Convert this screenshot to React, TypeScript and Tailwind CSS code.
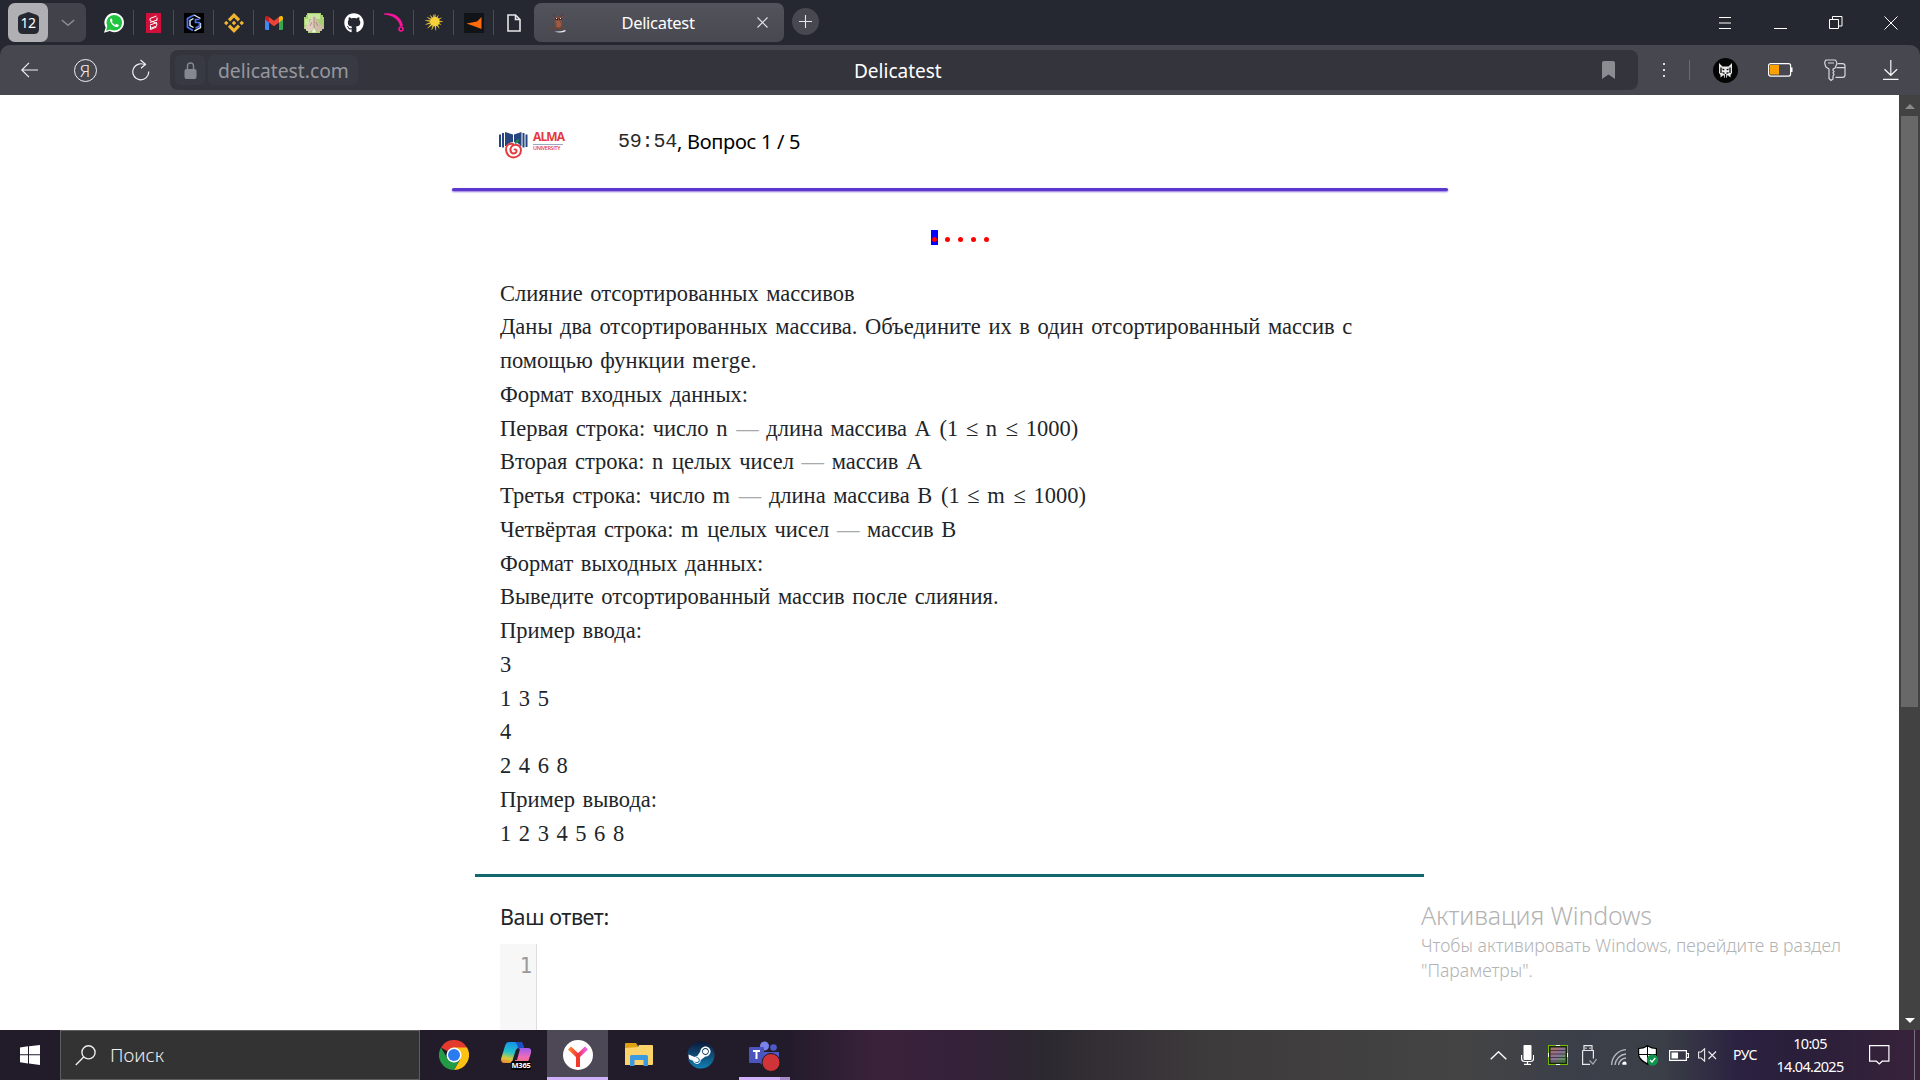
import { type ReactNode } from 'react';
import { FaGithub, FaSteam } from 'react-icons/fa';
import { SiBinance } from 'react-icons/si';

function Pin({ children }: { children: ReactNode }) {
  return (
    <div className="flex h-[25px] w-10 shrink-0 items-center justify-center border-r border-[#4b4d56] last:border-transparent">
      {children}
    </div>
  );
}

function HandsIcon() {
  return (
    <svg width="20" height="20" viewBox="0 0 20 20">
      <path d="M3 0h14v2h2v2h1v12h-2v2h-2v2H4v-2H2v-2H0V4h2V2h1z" fill="#a5cf72" />
      <path d="M4 1h12v5H4zM1 6h4v6H1z" fill="#c9e69f" />
      <path d="M9.800 3C8 4 6 8 5 10l-4 4 1 3 4 2 4-4z" fill="#e0cdbf" />
      <path d="M10.200 3C12 4 14 8 15 10l4 4-1 3-4 2-4-4z" fill="#d2baa9" />
      <path d="M10 4v11M8 9l-2 4M12 9l2 4" stroke="#9c8576" strokeWidth=".8" fill="none" />
      <path d="M7.500 19.500l2.500-4.500 2.500 4.500z" fill="#e8f2dc" />
    </svg>
  );
}

function Sun() {
  const rays = [
    [-90, 8], [-62, 7], [-30, 7.5], [0, 8], [28, 7], [58, 8], [85, 9], [112, 9], [138, 10], [162, 10], [186, 10], [208, 9], [232, 8], [256, 7],
  ];
  return (
    <svg width="18" height="18" viewBox="0 0 18 18">
      <circle cx="10" cy="7.500" r="4.600" fill="#f8d23a" />
      {rays.map(([a, r]) => (
        <path key={a} d={`M10 6.300L${10 + r} 7.500 10 8.700z`} fill="#f8d23a" stroke="#f8d23a" strokeWidth=".3" transform={`rotate(${a} 10 7.500)`} />
      ))}
    </svg>
  );
}

function Owl() {
  return (
    <svg width="18" height="20" viewBox="0 0 18 20">
      <path d="M5.500 3l2 1h3.500l3-1.500-1 4v6l-2.500 3H8L6 12z" fill="#8a4a34" />
      <path d="M6 5h3v2H6zM10 5h3v2h-3z" fill="#27324a" />
      <path d="M7 5h1v1H7zM11 5h1v1h-1z" fill="#d6dbe8" />
      <path d="M7 9h4M8 11h4M7.500 13h4" stroke="#c27a58" strokeWidth=".8" />
      <path d="M4.500 1l1.500 3M14 1l-2 3" stroke="#5d3a35" />
      <path d="M1 16l5-1 6 1 5-1" stroke="#6b4338" strokeWidth="1.500" fill="none" />
      <path d="M5 18q5 1.500 11-1l1 1q-6 3-12 0z" fill="#e8eef8" />
    </svg>
  );
}

function TabStrip() {
  return (
    <div className="flex h-[45px] items-start bg-[#252830]">
      <div className="ml-2 mt-[3px] flex h-[39px] w-[78px] items-center rounded-[7px] bg-[#42424b]">
        <div className="flex h-[39px] w-10 items-center justify-center rounded-[7px] bg-[#afafb4]">
          <div className="relative mt-px flex h-[22px] w-[21px] items-center justify-center">
            <svg className="absolute inset-0" width="21" height="22" viewBox="0 0 21 22">
              <path d="M10.500 0l8.500 3q2 1 2 3v11q0 5-5 5H5q-5 0-5-5V6q0-2 2-3z" fill="#252830" />
            </svg>
            <span className="relative font-['Noto_Sans'] text-[14px] leading-none tracking-[-0.5px] text-white">12</span>
          </div>
        </div>
        <svg className="ml-[13px]" width="14" height="8" viewBox="0 0 14 8">
          <path d="M.8 1L7 6.300 13.200 1" fill="none" stroke="#8d8d94" strokeWidth="1.500" />
        </svg>
      </div>
      <div className="ml-2 mt-[10px] flex">
        <Pin>
          <svg width="20" height="20" viewBox="0 0 20 20">
            <path d="M10.300 0a9.600 9.600 0 1 1-4.600 18L0 19.700l1.700-5.300A9.600 9.600 0 0 1 10.300 0z" fill="#fff" />
            <circle cx="10.300" cy="9.700" r="7.800" fill="#1fc43f" />
            <path d="M2 17.700l1.500-5 3.500 3.600z" fill="#1fc43f" />
            <path d="M7.300 5.200c-1.300.6-1.600 2-.9 3.600 1.100 2.600 3 4.400 5.500 5.200 1.400.4 2.800-.5 3-2.100l-2.500-1.200-1.100 1.200c-1.700-.7-2.700-1.800-3.400-3.200l.8-1z" fill="#fff" />
          </svg>
        </Pin>
        <Pin>
          <svg width="15" height="20" viewBox="0 0 15 20">
            <path d="M0 0h15v20H0z" fill="#d0103a" />
            <path d="M10.500 3L4 5.500v2l7 3-.5 2.500L4 15.500M4 9.500L11 7M11 4.500v3M4 12l7-2.500M4.500 12.500v4l6-2.500" fill="none" stroke="#fff" strokeWidth="1" />
          </svg>
        </Pin>
        <Pin>
          <svg width="20" height="20" viewBox="0 0 20 20">
            <path d="M0 0h20v20H0z" fill="#000" />
            <path d="M10 2L3.500 5.500v8.700L9 17.500" fill="none" stroke="#4c75e8" strokeWidth="1.800" />
            <path d="M10 2l6.500 3.500M10.500 17.800l6-3.300V10" fill="none" stroke="#e8ecf8" strokeWidth="1.400" />
            <path d="M9.500 5.500L6 7.500v5l3.500 2" fill="none" stroke="#e8ecf8" strokeWidth="1.400" />
            <path d="M15.500 6.500h-4v3h4v3.500l-4 2" fill="none" stroke="#4c75e8" strokeWidth="1.700" />
          </svg>
        </Pin>
        <Pin><SiBinance size={20} color="#f0b42f" /></Pin>
        <Pin>
          <svg width="18" height="14" viewBox="0 0 18 14">
            <path d="M0 2.500V12.800Q0 14 1.200 14H4V6z" fill="#4285f4" />
            <path d="M18 2.500V12.800Q18 14 16.800 14H14V6z" fill="#34a853" />
            <path d="M14 1v5.500l4-3V2c0-2-2-2.500-3.400-1.400z" fill="#fbbc04" />
            <path d="M4 1v5.500l-4-3V2C0 0 2-.5 3.400.6z" fill="#c5221f" />
            <path d="M4 1l5 3.800L14 1v5.500l-5 3.800-5-3.800z" fill="#ea4335" />
          </svg>
        </Pin>
        <Pin><HandsIcon /></Pin>
        <Pin><FaGithub size={20} color="#fff" /></Pin>
        <Pin>
          <svg width="20" height="19" viewBox="0 0 20 19">
            <path d="M0 .5C8-.8 17 2 19 13h-3C15 7 9 2 0 1.500z" fill="#fb149b" />
            <circle cx="17" cy="16" r="2" fill="none" stroke="#fb149b" strokeWidth="1.500" />
          </svg>
        </Pin>
        <Pin><Sun /></Pin>
        <Pin>
          <svg width="20" height="20" viewBox="0 0 20 20">
            <path d="M0 0h20v20H0z" fill="#111416" />
            <path d="M2.500 10.500L13 8.500 17.500 4v12L11 13.500z" fill="#fd6a0b" />
          </svg>
        </Pin>
        <Pin>
          <svg width="14" height="18" viewBox="0 0 14 18">
            <path d="M1 1h7.500L13 5.500V17H1z M8.500 1v4.500H13" fill="none" stroke="#e5e5e8" strokeWidth="1.600" />
          </svg>
        </Pin>
      </div>
      <div className="mt-[3px] flex h-[39px] w-[250px] items-center rounded-[7px] bg-gradient-to-b from-[#53535c] to-[#484851] pl-[15px]">
        <Owl />
        <div className="w-[182px] text-center">
          <span className="font-['Noto_Sans'] text-[16.5px] leading-[39px] tracking-[-0.3px] text-white">Delicatest</span>
        </div>
        <svg className="ml-[8px]" width="11" height="11" viewBox="0 0 11 11">
          <path d="M.5.5l10 10M10.500.5l-10 10" stroke="#e6e6e8" strokeWidth="1.100" />
        </svg>
      </div>
      <div className="ml-2 mt-2 flex h-[27px] w-[27px] items-center justify-center rounded-full bg-[#484851]">
        <svg width="13" height="13" viewBox="0 0 13 13"><path d="M6.500 0v13M0 6.500h13" stroke="#e6e6e8" strokeWidth="1.100" /></svg>
      </div>
      <div className="ml-auto mr-[22px] flex h-[45px] items-center">
        <svg className="mr-[43px]" width="12" height="12" viewBox="0 0 12 12"><path d="M0 .5h12M0 6h12M0 11.500h12" stroke="#fff" /></svg>
        <svg className="mr-[42px] mt-[12px]" width="13" height="1"><path d="M0 .5h13" stroke="#fff" /></svg>
        <svg className="mr-[41px]" width="14" height="14" viewBox="0 0 14 14">
          <path d="M.5 3.500h9v9h-9zM3.500 3.500v-3h9.500v9.500H9.500" fill="none" stroke="#fff" />
        </svg>
        <svg width="14" height="14" viewBox="0 0 14 14"><path d="M.5.5l13 13M13.500.5l-13 13" stroke="#fff" /></svg>
      </div>
    </div>
  );
}

function Toolbar() {
  return (
    <div className="bg-[#252830]">
      <div className="flex h-[50px] items-center rounded-t-[10px] bg-[#474750]">
        <svg className="ml-[21px]" width="18" height="16" viewBox="0 0 18 16">
          <path d="M.8 8H17M8 .8L.8 8 8 15.200" fill="none" stroke="#f0f0f2" strokeWidth="1.200" />
        </svg>
        <div className="ml-[35px] flex h-[23px] w-[23px] items-center justify-center rounded-full border border-[#f0f0f2]">
          <span className="mr-px font-['Noto_Sans'] text-[17px] font-light leading-none text-[#f0f0f2]">Я</span>
        </div>
        <svg className="ml-[35px]" width="18" height="22" viewBox="0 0 18 22">
          <path d="M16.800 12.500A8 8 0 1 1 13.500 6.300M8.500 1l5 4.300-4.500 4" fill="none" stroke="#f0f0f2" strokeWidth="1.200" />
        </svg>
        <div className="ml-[20px] flex h-10 w-[1468px] items-center rounded-[8px] bg-[#34343d]">
          <div className="ml-[5px] flex h-[30px] w-[30px] items-center justify-center rounded-[6px] bg-[#383a43]">
            <svg width="13" height="17" viewBox="0 0 13 17">
              <path d="M3.500 8V4a3 3 0 0 1 6 0v4" fill="none" stroke="#85888f" strokeWidth="1.400" />
              <rect x=".5" y="7" width="12" height="10" rx="2" fill="#85898f" />
            </svg>
          </div>
          <div className="ml-[3px] flex h-[30px] w-[150px] items-center rounded-[6px] bg-[#383a43] pl-[10px] pt-[2px]">
            <span className="font-['Noto_Sans'] text-[19.3px] leading-[30px] text-[#96979e]">delicatest.com</span>
          </div>
          <span className="ml-[496px] w-[90px] pt-[2px] font-['Noto_Sans'] text-[19px] leading-[38px] text-white">Delicatest</span>
          <svg className="ml-auto mr-[23px]" width="13" height="18" viewBox="0 0 13 18"><path d="M0 2q0-2 2-2h9q2 0 2 2v16l-6.500-4.500L0 18z" fill="#8b8b92" /></svg>
        </div>
        <svg className="ml-[25px]" width="3" height="15"><path d="M0 0h2v2H0zM0 6h2v2H0zM0 12h2v2H0z" fill="#dcdce0" /></svg>
        <div className="ml-[23px] h-5 w-px bg-[#6b6b74]" />
        <svg className="ml-[23px]" width="25" height="25" viewBox="0 0 25 25">
          <circle cx="12.500" cy="12.500" r="12.500" fill="#050505" />
          <path d="M6 5l3.500 3.500h6L19 5v10l-1.500 2v2.500L14.500 17l-1 3h-2l-1-3-3 2.500V17L6 15z" fill="#e9e9e9" />
          <path d="M8 9.500V15M17 9.500V15M9.500 11l1.800 1M15.500 11l-1.800 1M9.500 14.500l2 .8M15.500 14.500l-2 .8M12.500 16v4" fill="none" stroke="#050505" strokeWidth="1.300" />
        </svg>
        <svg className="ml-[30px]" width="26" height="14" viewBox="0 0 26 14">
          <rect x=".6" y=".6" width="22" height="12.500" rx="2" fill="none" stroke="#fff" strokeWidth="1.200" />
          <rect x="2" y="2" width="9" height="9.500" fill="#ffa200" />
          <path d="M23 4.500h1.500v4.500H23z" fill="#fff" />
        </svg>
        <svg className="ml-[30px]" width="22" height="23" viewBox="0 0 22 23">
          <path d="M2 1h9q2 1 1.800 4L11 9l-2 1v1.500l1 1-1 1.500 1 1.500-1 1.500v3L7 21.500l-2-2V10L2 8Q-.5 3 2 1zM4 4h6" fill="none" stroke="#d8d8dc" strokeWidth="1.200" />
          <path d="M13.500 4.600h5q2.500 0 2.500 2.500v9q0 2.300-2.500 2.300H11.500M12.500 8.600H21" fill="none" stroke="#d8d8dc" strokeWidth="1.200" />
        </svg>
        <svg className="ml-[37px]" width="16" height="20" viewBox="0 0 16 20">
          <path d="M7.800 0v15M1.500 9.300l6.300 6 6.300-6M0 19.400h15.500" fill="none" stroke="#f5f5f7" strokeWidth="1.200" />
        </svg>
      </div>
    </div>
  );
}

function L({ children }: { children: ReactNode }) {
  return <div className="h-[33.75px] leading-[33.75px]">{children}</div>;
}

const Dash = () => <span className="text-[#a6aaad]">—</span>;
const Sym = ({ children }: { children: ReactNode }) => <span className="tracking-[1.2px]">{children}</span>;

function Question() {
  return (
    <div className="ml-[500px] mt-[31.6px] h-[597.4px] whitespace-pre font-['Liberation_Serif'] text-[22.5px] text-[#212529] [word-spacing:1.95px]">
      <L>Слияние отсортированных массивов</L>
      <L>Даны два отсортированных массива. Объедините их в один отсортированный массив с</L>
      <L>помощью функции <span className="tracking-[0.6px]">merge</span>.</L>
      <L>Формат входных данных:</L>
      <L>Первая строка: число <Sym>n</Sym> <Dash /> длина массива <Sym>A</Sym> (1 ≤ <Sym>n</Sym> ≤ 1000)</L>
      <L>Вторая строка: <Sym>n</Sym> целых чисел <Dash /> массив A</L>
      <L>Третья строка: число <Sym>m</Sym> <Dash /> длина массива <Sym>B</Sym> (1 ≤ <Sym>m</Sym> ≤ 1000)</L>
      <L>Четвёртая строка: <Sym>m</Sym> целых чисел <Dash /> массив B</L>
      <L>Формат выходных данных:</L>
      <L>Выведите отсортированный массив после слияния.</L>
      <L>Пример ввода:</L>
      <L>3</L>
      <L>1 3 5</L>
      <L>4</L>
      <L>2 4 6 8</L>
      <L>Пример вывода:</L>
      <L>1 2 3 4 5 6 8</L>
    </div>
  );
}

function AlmaLogo() {
  return (
    <div className="flex h-[27px] w-[67px]">
      <svg width="29" height="27" viewBox="0 0 29 27">
        <path d="M0 2.500h2V15H0zM3 1h2v14.500H3zM6 0l8 2.500V16l-8-2zM15 2.500L22.500 0v14L15 16zM23.500 1h2v14.500h-2zM26.500 2.500h2V15h-2z" fill="#27457f" />
        <circle cx="14.500" cy="18.500" r="8.500" fill="#fff" />
        <path d="M15.500 12q1-4.500 4.500-5 0 4.500-4.500 5z" fill="#23894b" />
        <path d="M14.500 12.300q-1.500-1-4-.3-3.500 1.500-3.500 5.800 1 7.200 7.500 7.700 7-.8 7.500-7 0-4.500-4-5.500-5-.7-6.500 3.500-.5 4.500 3 5 3.500-.5 3-3-1-1.700-2.500-.8" fill="none" stroke="#e5393d" strokeWidth="1.900" />
      </svg>
      <div className="ml-[5px] flex flex-col font-['Open_Sans'] font-bold text-[#e5393d]">
        <span className="h-[12px] text-[12px] leading-[10px] tracking-[-0.9px]">ALMA</span>
        <span className="h-px w-[30px] bg-[#9aa6c0]" />
        <span className="mt-px h-[7px] text-[5.4px] font-semibold leading-[5px] tracking-[-0.35px]">UNIVERSITY</span>
      </div>
    </div>
  );
}

function Page() {
  return (
    <div className="relative flex h-[935px] overflow-hidden bg-white">
      <div className="flex w-[1899px] flex-col">
        <div className="ml-[452px] flex h-[93px] w-[995px] items-start pl-[47px]">
          <div className="mt-[37px]"><AlmaLogo /></div>
          <div className="ml-[52px] mt-[31.5px] flex h-[30px] leading-[30px] text-black">
            <span className="font-['Liberation_Mono'] text-[20px] tracking-[-0.2px] text-[#2a2a2a]">59:54</span>
            <span className="font-['Noto_Sans'] text-[20px] tracking-[-0.3px]">, Вопрос 1 / 5</span>
          </div>
        </div>
        <div className="ml-[452px] h-[3px] w-[996px] rounded-full bg-[#5d38cc] shadow-[0_1px_2px_#8f6fe0]" />
        <div className="ml-[931px] mt-[39px] flex h-[15px]">
          {[0, 1, 2, 3, 4].map((i) => (
            <div key={i} className="mr-[5.9px] flex h-[15px] w-[7px] items-center justify-center pt-[4px] first:bg-[#0000ff]">
              <span className="h-[5px] w-[5px] rounded-full bg-[#ff0000]" />
            </div>
          ))}
        </div>
        <Question />
        <div className="ml-[475px] h-[3px] w-[949px] bg-[#11686f]" />
        <div className="ml-[500px] mt-[23px] h-[34px] font-['Noto_Sans'] text-[21.5px] leading-[34px] tracking-[-0.4px] text-[#212529]">
          Ваш ответ:
        </div>
        <div className="ml-[500px] mt-[10px] h-[86px] w-[37px] border-r border-[#dddddd] bg-[#f7f7f7] pr-[4px] pt-[6px] text-right font-['DejaVu_Sans_Mono'] text-[20.5px] leading-[32px] text-[#999999]">1</div>
      </div>
      <div className="flex w-[21px] flex-col items-center bg-[#424242]">
        <svg className="mt-[9px]" width="10" height="6"><path d="M5 0l5 5H0z" fill="#8a8a8a" /></svg>
        <div className="mt-[6px] h-[591px] w-[17px] bg-[#686868]" />
        <svg className="mb-[6px] mt-auto" width="10" height="6"><path d="M0 0h10L5 5z" fill="#fff" /></svg>
      </div>
      <div className="absolute left-[1421px] top-[802px] font-['Noto_Sans'] font-light text-[#b3b3b3]">
        <div className="h-[36px] text-[25px] leading-[36px] tracking-[-0.15px]">Активация Windows</div>
        <div className="text-[17.6px] leading-[25px]">Чтобы активировать Windows, перейдите в раздел</div>
        <div className="text-[17.6px] leading-[25px]">"Параметры".</div>
      </div>
    </div>
  );
}

function Tray() {
  return (
    <div className="ml-auto flex h-[50px] items-center">
      <svg width="17" height="9" viewBox="0 0 17 9"><path d="M.7 8.300L8.500.8l7.800 7.500" fill="none" stroke="#fff" strokeWidth="1.400" /></svg>
      <svg className="ml-[14px]" width="13" height="20" viewBox="0 0 13 20">
        <rect x="2.500" width="8" height="15" rx="1" fill="#fff" />
        <path d="M.6 10v3.500q0 3 3 3h6q3 0 3-3V10M6.500 16.500v3M3 19.400h7" fill="none" stroke="#fff" strokeWidth="1.200" />
      </svg>
      <svg className="ml-[14px]" width="20" height="20" viewBox="0 0 20 20">
        <defs><linearGradient id="chip" x1="0" x2="1" y2="1"><stop stopColor="#b0705a" /><stop offset=".5" stopColor="#8a7098" /><stop offset="1" stopColor="#3fae3a" /></linearGradient></defs>
        <path d="M0 0h20v20H0z" fill="#76b900" />
        <path d="M1 1h18v18H1z" fill="#16240c" />
        <path d="M2.500 2.500h15v15h-15z" fill="url(#chip)" />
        <path d="M2 5.500h16M2 9h16M2 12.500h16M2 16h16" stroke="#3b3340" strokeWidth=".9" />
        <path d="M8 0h4v1H8zM8 19h4v1H8zM0 8h1v4H0zM19 8h1v4h-1z" fill="#fff" />
      </svg>
      <svg className="ml-[14px]" width="15" height="20" viewBox="0 0 15 20">
        <path d="M2 5.500V.6h8v5M.6 5.500h10.800v8M8 19.400H.6V5.500M4 2.500v1.500M8 2.500v1.500" fill="none" stroke="#e8e8ea" strokeWidth="1.200" />
        <path d="M7.500 15.500l3.500 3.500 3.500-5" fill="none" stroke="#a8a8ac" strokeWidth="1.300" />
      </svg>
      <svg className="ml-[14px] mt-[4px]" width="16" height="16" viewBox="0 0 16 16">
        <path d="M.7 16A15.300 15.300 0 0 1 15 .7M4 16A12 12 0 0 1 15 5M7.500 16A8.500 8.500 0 0 1 15 9" fill="none" stroke="#b9bbc0" strokeWidth="1.300" />
        <path d="M11.500 15.800a2 2 0 0 1 4-2v2z" fill="#fff" />
      </svg>
      <svg className="ml-[11px]" width="21" height="21" viewBox="0 0 21 21">
        <path d="M9.500 0q4 3 9.500 3v6q0 6-9.500 11Q0 15 0 9V3q5.500 0 9.500-3z" fill="#000" />
        <path d="M9 1.800V9H1.200V4Q5.500 4 9 1.800zM10 1.800Q13.500 4 17.800 4v5H10zM1.200 10H9v8q-7-4-7.800-8zM10 10h7.800q-1 5-7.800 8z" fill="#fff" />
        <circle cx="14.500" cy="15" r="5.700" fill="#10934d" />
        <path d="M12 15l2 2 3.300-4" fill="none" stroke="#fff" strokeWidth="1.200" />
      </svg>
      <svg className="ml-[10px]" width="20" height="11" viewBox="0 0 20 11">
        <path d="M.6.600h16.800v9.800H.6zM18 3.500h1.500v4H18" fill="none" stroke="#fff" strokeWidth="1.200" />
        <path d="M2.500 2.500H9v6H2.500z" fill="#fff" />
      </svg>
      <svg className="ml-[9px]" width="19" height="14" viewBox="0 0 19 14">
        <path d="M.6 4h2.500l3.500-3.200v12.400L3.100 10H.6z" fill="none" stroke="#e8e8ea" strokeWidth="1.100" />
        <path d="M10.500 3.500l7.500 7.500M18 3.500L10.500 11" stroke="#e8e8ea" strokeWidth="1.200" />
      </svg>
      <div className="ml-[16px] w-[26px] font-['Noto_Sans'] text-[14px] leading-[20px] tracking-[-0.4px] text-white">РУС</div>
      <div className="ml-[15px] flex h-[50px] w-[72px] flex-col items-center justify-center font-['Noto_Sans'] text-[14.500px] leading-[23px] tracking-[-0.7px] text-white">
        <span>10:05</span>
        <span>14.04.2025</span>
      </div>
      <svg className="ml-[23px]" width="21" height="20" viewBox="0 0 21 20">
        <path d="M.6.6h19.300v15.600h-6.700L10.300 19l-2.900-2.800H.6z" fill="none" stroke="#fff" strokeWidth="1.200" />
      </svg>
      <div className="ml-[24px] mr-[5px] h-[50px] w-px bg-[#77707e]" />
    </div>
  );
}

function Taskbar() {
  return (
    <div className="flex h-[50px] items-center bg-[linear-gradient(90deg,#211b2a_0px,#211b2a_780px,#3b223b_880px,#35213a_960px,#2c2830_1040px,#3d3a3c_1200px,#444444_1460px,#3a3f49_1580px,#3b4048_1660px,#2b2140_1740px,#2a1f3a_1800px,#38223a_1920px)]">
      <svg className="ml-5" width="20" height="20" viewBox="0 0 20 20"><path d="M0 2.500l8-1.200V9.300H0zM9 1.200L20 0v9.300H9zM0 10.300h8v8.200l-8-1.200zM9 10.300h11V20L9 18.500z" fill="#fff" /></svg>
      <div className="ml-5 flex h-[50px] w-[360px] items-center border border-[#5e5e5e] bg-[#333333]">
        <svg className="ml-[14px]" width="21" height="21" viewBox="0 0 21 21"><circle cx="13.500" cy="7.300" r="6.600" fill="none" stroke="#eee" strokeWidth="1.400" /><path d="M8.700 12L.8 20" stroke="#eee" strokeWidth="1.400" /></svg>
        <span className="ml-[14px] font-['Noto_Sans'] text-[18.800px] font-light leading-[48px] text-[#eeeeee]">Поиск</span>
      </div>
      <svg className="ml-[19px]" width="30" height="30" viewBox="0 0 30 30">
        <path d="M15 15L2 7.500A15 15 0 0 1 28 7.500z" fill="#e33b2e" />
        <path d="M15 15V7.500h13A15 15 0 0 1 15 30l6.500-11.300z" fill="#fdc113" />
        <path d="M15 15l6 4L15 30A15 15 0 0 1 2 7.500l6.500 11z" fill="#239a45" />
        <circle cx="15" cy="15" r="7.500" fill="#fff" />
        <circle cx="15" cy="15" r="6" fill="#2a7bf0" />
      </svg>
      <div className="relative ml-[32px] h-[30px] w-[31px]">
        <svg width="31" height="30" viewBox="0 0 31 30">
          <defs>
            <linearGradient id="cpa" x1=".3" x2=".1" y2="1"><stop stopColor="#1795e6" /><stop offset=".45" stopColor="#25c2c8" /><stop offset=".75" stopColor="#d8c93a" /><stop offset="1" stopColor="#f08030" /></linearGradient>
            <linearGradient id="cpb" x1="0" x2="0" y2="1"><stop stopColor="#9a5cf0" /><stop offset=".5" stopColor="#f06bb8" /><stop offset="1" stopColor="#f07850" /></linearGradient>
          </defs>
          <path d="M8 2h11q2.500 0 2 3l-4 3q-2 1-2.500 3L11 22q-1 1-3 1H3q-3 0-3-4L4 6q1-4 4-4z" fill="url(#cpa)" />
          <path d="M14 2h6q2.500.5 3 6l-6 0q-1-5-3-6z" fill="#1b4fc4" />
          <path d="M19 8h8q4 0 3 5l-3 9q-1 4-4 4H10q3-1 4-5l3-10q.5-3 2-3z" fill="url(#cpb)" />
          <path d="M15 12q1-3 4-3l-3 11h-4z" fill="#211b2a" />
        </svg>
        <div className="absolute left-[10px] top-[21px] flex h-[9px] w-[20px] items-center justify-center rounded-[2px] bg-black font-['Noto_Sans'] text-[7.500px] font-bold leading-none tracking-[-0.2px] text-white">M365</div>
      </div>
      <div className="ml-[15px] flex h-[50px] w-[61px] items-center justify-center border-b-[3px] border-[#cfb2fb] bg-[#4c4855] pt-[3px]">
        <svg width="30" height="30" viewBox="0 0 30 30">
          <defs><linearGradient id="yb" gradientUnits="userSpaceOnUse" x1="5" x2="25" y1="0" y2="0"><stop offset=".1" stopColor="#fb7a2c" /><stop offset=".5" stopColor="#f2303c" /><stop offset=".85" stopColor="#ee5ad8" /></linearGradient></defs>
          <circle cx="15" cy="15" r="15" fill="#fff" />
          <path d="M6.500 8l8.500 8 8.500-8" fill="none" stroke="url(#yb)" strokeWidth="4.300" />
          <path d="M13 15h4v12h-4z" fill="#f23a2c" />
        </svg>
      </div>
      <svg className="ml-[17px]" width="28" height="24" viewBox="0 0 28 24">
        <path d="M0 1q0-1 1-1h10l2 3v4H0z" fill="#e0a010" />
        <path d="M0 5l13-1 1-2h13q1 0 1 1v18q0 1-1 1H0z" fill="#fcd36a" />
        <path d="M5 13.500q0-1.500 1.500-1.500h15q1.500 0 1.500 1.500V23h-4.500v-6h-9v6H5z" fill="#3c9ae0" />
      </svg>
      <div className="ml-[34px] h-7 w-7 rounded-full bg-[radial-gradient(circle,#ffffff_60%,transparent_66%)]">
        <svg width="0" height="0" className="absolute"><defs><linearGradient id="stm" x1="0" x2="0" y2="1"><stop stopColor="#0d1838" /><stop offset="1" stopColor="#1080b4" /></linearGradient></defs></svg>
        <FaSteam size={28} fill="url(#stm)" />
      </div>
      <div className="ml-[24px] flex h-[50px] w-[51px] flex-col">
        <svg className="ml-[10px] mt-[11px]" width="32" height="31" viewBox="0 0 32 31">
          <circle cx="15.500" cy="5" r="4.500" fill="#7b83eb" /><circle cx="24.500" cy="6.500" r="3.300" fill="#5059c9" />
          <path d="M9 11h21v8q-2 6-8 6h-6q-5-1-7-7z" fill="#5059c9" />
          <path d="M0 7q0-1 1-1h13q1 0 1 1v14q0 1-1 1H1q-1 0-1-1z" fill="#4b53bc" />
          <path d="M4 10h7M7.500 10v8" stroke="#fff" strokeWidth="2" />
          <circle cx="22" cy="21.500" r="9" fill="#d13438" stroke="#1e1a22" strokeWidth="1" />
        </svg>
        <div className="mt-auto flex h-[3px]"><div className="w-[41px] bg-[#cfb2fb]" /><div className="w-[10px] bg-[#a58cc8]" /></div>
      </div>
      <Tray />
    </div>
  );
}

export default function App() {
  return (
    <div className="h-[1080px] w-[1920px] overflow-hidden">
      <TabStrip />
      <Toolbar />
      <Page />
      <Taskbar />
    </div>
  );
}
